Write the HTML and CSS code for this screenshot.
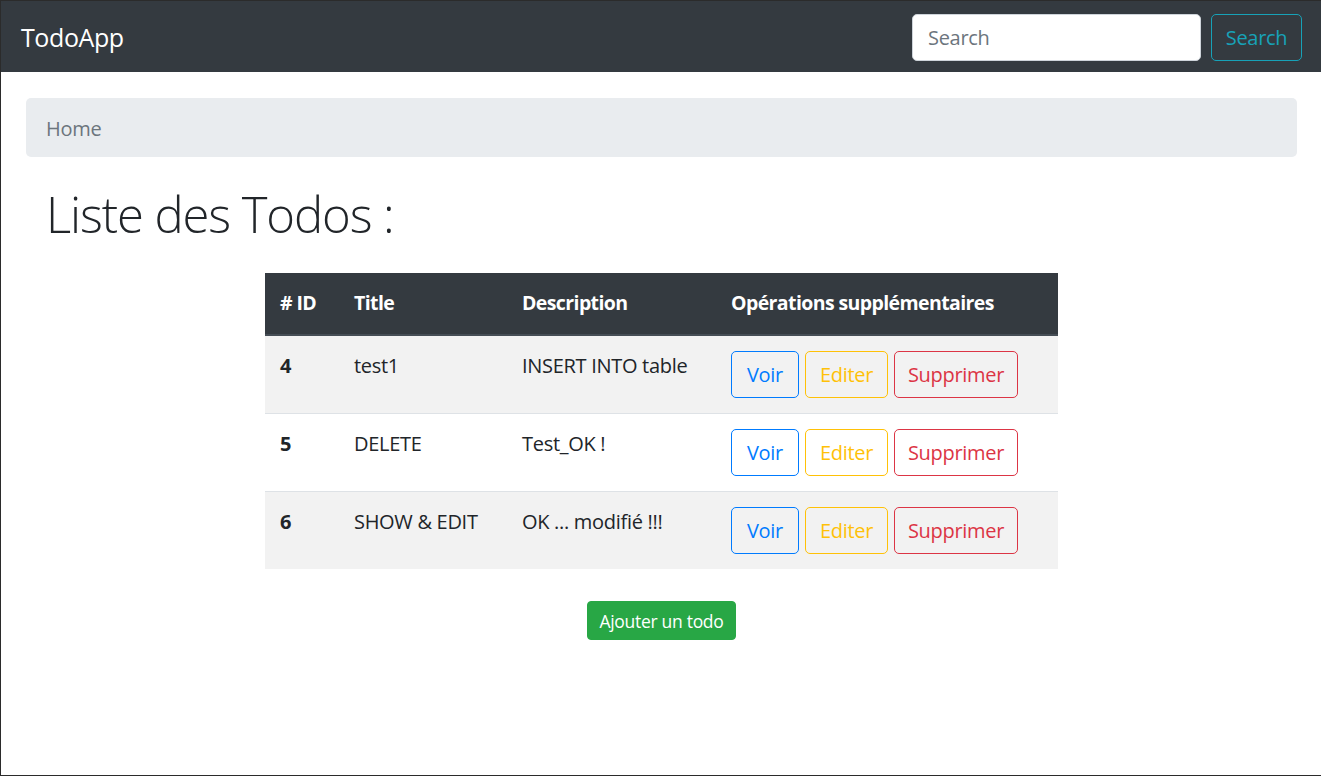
FILE: index.html
```html
<!DOCTYPE html>
<html lang="fr">
<head>
<meta charset="utf-8">
<title>TodoApp</title>
<link rel="stylesheet" href="styles.css">
</head>
<body>
<div class="frame">
  <span class="chrome-line"></span>
  <nav class="navbar">
    <a class="brand" href="#">TodoApp</a>
    <form class="search-form">
      <input class="search-input" type="search" placeholder="Search">
      <button class="btn btn-outline-info" type="button">Search</button>
    </form>
  </nav>
  <main class="main">
    <div class="breadcrumb">Home</div>
    <h1 class="page-title">Liste des Todos :</h1>
    <table class="todo-table">
      <colgroup>
        <col class="c-id"><col class="c-title"><col class="c-desc"><col class="c-ops">
      </colgroup>
      <thead>
        <tr><th># ID</th><th>Title</th><th>Description</th><th>Opérations supplémentaires</th></tr>
      </thead>
      <tbody>
        <tr class="odd">
          <th>4</th><td>test1</td><td>INSERT INTO table</td>
          <td><div class="ops"><a class="btn btn-primary-o btn-voir" href="#">Voir</a><a class="btn btn-warning-o btn-edit" href="#">Editer</a><a class="btn btn-danger-o btn-del" href="#">Supprimer</a></div></td>
        </tr>
        <tr>
          <th>5</th><td>DELETE</td><td>Test_OK !</td>
          <td><div class="ops"><a class="btn btn-primary-o btn-voir" href="#">Voir</a><a class="btn btn-warning-o btn-edit" href="#">Editer</a><a class="btn btn-danger-o btn-del" href="#">Supprimer</a></div></td>
        </tr>
        <tr class="odd">
          <th>6</th><td>SHOW &amp; EDIT</td><td>OK ... modifié !!!</td>
          <td><div class="ops"><a class="btn btn-primary-o btn-voir" href="#">Voir</a><a class="btn btn-warning-o btn-edit" href="#">Editer</a><a class="btn btn-danger-o btn-del" href="#">Supprimer</a></div></td>
        </tr>
      </tbody>
    </table>
    <div class="add-row"><a class="btn-add" href="#">Ajouter un todo</a></div>
  </main>
</div>
</body>
</html>
```
FILE: styles.css
```css
* { box-sizing: border-box; }
html, body { margin: 0; padding: 0; }
body {
  font-family: "Open Sans", "Noto Sans", sans-serif;
  font-size: 20px;
  line-height: 30px;
  letter-spacing: -0.3px;
  color: #212529;
  background: #fff;
}
.frame {
  position: relative;
  height: 776px;
  border-left: 1px solid #2b2b2b;
  border-top: 1px solid #2b2b2b;
  border-bottom: 1px solid #2b2b2b;
  overflow: hidden;
}
.chrome-line {
  position: absolute;
  top: -1px;
  left: 118px;
  width: 1141px;
  height: 1px;
  background: #7b7b7b;
}
.navbar {
  height: 71px;
  background: #343a40;
  display: flex;
  align-items: center;
  justify-content: space-between;
  padding: 2px 19px 0 20px;
}
.brand {
  color: #fff;
  text-decoration: none;
  font-size: 25px;
  line-height: 37px;
  letter-spacing: -0.4px;
}
.search-form {
  display: flex;
  gap: 10px;
}
.search-input {
  width: 289px;
  height: 47px;
  border: 1px solid #ced4da;
  border-radius: 5px;
  padding: 0 15px;
  font-family: inherit;
  font-size: 20px;
  letter-spacing: -0.3px;
  color: #495057;
  background: #fff;
  outline: none;
}
.search-input::placeholder { color: #6c757d; }
.btn {
  display: inline-flex;
  align-items: center;
  justify-content: center;
  height: 47px;
  border: 1px solid transparent;
  border-radius: 5px;
  font-family: inherit;
  font-size: 20px;
  letter-spacing: -0.3px;
  text-decoration: none;
  background: transparent;
  padding: 0;
}
.btn-outline-info {
  width: 91px;
  color: #17a2b8;
  border-color: #17a2b8;
}
.main {
  padding: 26px 24px 0 25px;
}
.breadcrumb {
  background: #e9ecef;
  border-radius: 5px;
  padding: 16px 20px 13px;
  color: #6c757d;
}
.page-title {
  margin: 27px 0 28px;
  padding-left: 20px;
  font-size: 49px;
  line-height: 61px;
  font-weight: 300;
  letter-spacing: -1.1px;
}
.todo-table {
  margin: 0 auto;
  width: 793px;
  table-layout: fixed;
  border-collapse: collapse;
}
.c-id { width: 74px; }
.c-title { width: 168px; }
.c-desc { width: 209px; }
.c-ops { width: 342px; }
.todo-table th, .todo-table td {
  text-align: left;
  vertical-align: top;
  padding: 15px;
  white-space: nowrap;
}
.todo-table thead th {
  background: #343a40;
  color: #fff;
  font-weight: 700;
  font-size: 19.5px;
  letter-spacing: -0.6px;
  padding-bottom: 16px;
  border-bottom: 2px solid #454d55;
}
.todo-table tbody tr { border-top: 1px solid #dee2e6; }
.todo-table tbody tr:first-child { border-top-color: #454d55; }
.todo-table tbody tr.odd { background: #f2f2f2; }
.todo-table tbody th { font-weight: 700; }
.ops {
  display: flex;
  gap: 6px;
}
.btn-voir { width: 68px; }
.btn-edit { width: 83px; }
.btn-del { width: 124px; }
.btn-primary-o { color: #007bff; border-color: #007bff; }
.btn-warning-o { color: #ffc107; border-color: #ffc107; }
.btn-danger-o { color: #dc3545; border-color: #dc3545; }
.add-row {
  display: flex;
  justify-content: center;
  margin-top: 32px;
}
.btn-add {
  display: inline-flex;
  align-items: center;
  justify-content: center;
  width: 149px;
  height: 39px;
  background: #28a745;
  border: 1px solid #28a745;
  border-radius: 4px;
  color: #fff;
  font-size: 17.5px;
  letter-spacing: -0.3px;
  text-decoration: none;
}
```
